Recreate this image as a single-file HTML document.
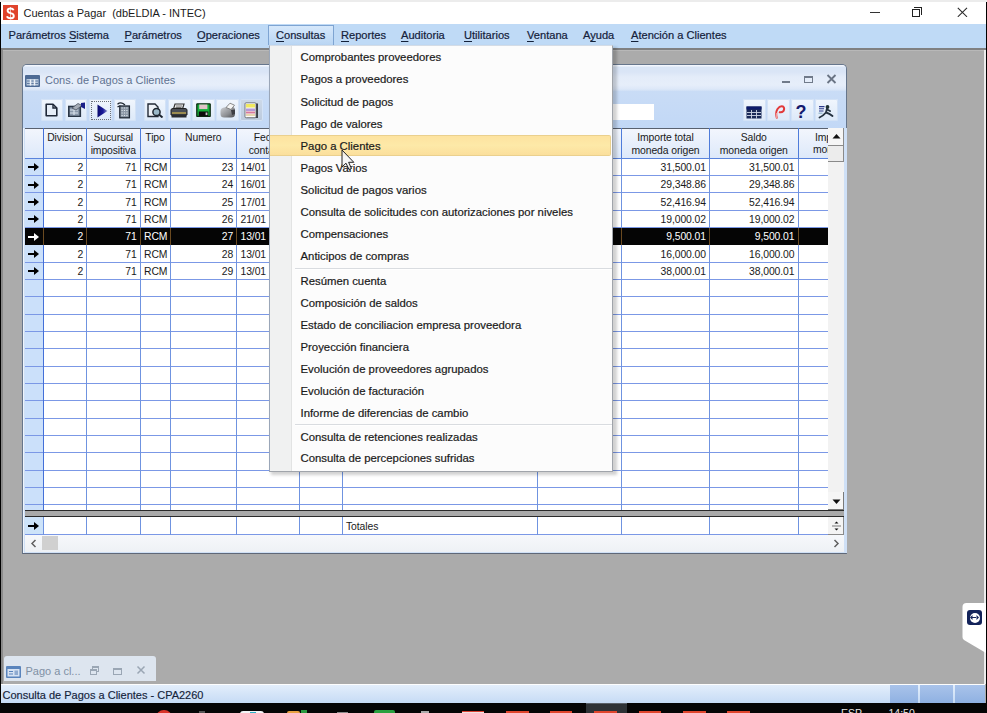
<!DOCTYPE html>
<html><head><meta charset="utf-8">
<style>
*{margin:0;padding:0;box-sizing:border-box}
html,body{width:987px;height:713px;overflow:hidden;background:#ababab;font-family:"Liberation Sans",sans-serif;position:relative}
.a{position:absolute}
.t{position:absolute;white-space:pre;line-height:1}
.mi{position:absolute;top:30px;font-size:11.1px;color:#14213a;-webkit-text-stroke:0.2px #14213a;white-space:pre;line-height:1}
.ul{text-decoration:underline;text-underline-offset:1.5px;text-decoration-thickness:1px}
.g{position:absolute;white-space:pre;line-height:1;font-size:10.4px;color:#1a1a1a;letter-spacing:-0.1px}
.vl{position:absolute;width:1px;background:#6f93e0}
.hl{position:absolute;height:1px;background:#7b98e6}
.menu .it{position:absolute;left:300.5px;font-size:11.35px;color:#1a1a1a;-webkit-text-stroke:0.2px #1a1a1a;white-space:pre;line-height:1}
.tb{position:absolute;top:99.2px;width:22.5px;height:21.6px;border-radius:2px;background:linear-gradient(#eef5fd,#dbe8f8);box-shadow:inset 0 0 0 1px #d3e2f6}
</style></head><body>

<div class="a" style="left:0;top:0;width:987px;height:24px;background:#fff"></div>
<div class="a" style="left:3px;top:5px;width:15px;height:15px;background:#e0432b"></div>
<svg class="a" style="left:3px;top:5px" width="15" height="15" viewBox="0 0 15 15"><path d="M10.6 5.2Q10 3.5 7.5 3.5Q4.6 3.5 4.6 5.8Q4.6 7.4 7.5 8.1Q10.8 8.8 10.8 10.9Q10.8 13.3 7.5 13.3Q4.6 13.3 4 11.2" fill="none" stroke="#fff" stroke-width="1.9"/><path d="M7.5 2V14.5" stroke="#fff" stroke-width="0.9" opacity="0.7"/></svg>
<div class="t" style="left:23.5px;top:7.5px;font-size:11px;color:#1a1a1a">Cuentas a Pagar  (dbELDIA - INTEC)</div>
<div class="a" style="left:0;top:0;width:987px;height:2px;background:#ececec"></div>
<div class="a" style="left:870px;top:11.5px;width:9.5px;height:1.2px;background:#333"></div>
<div class="a" style="left:912px;top:9px;width:8px;height:8px;border:1px solid #222"></div>
<div class="a" style="left:914px;top:7px;width:8px;height:8px;border-top:1px solid #222;border-right:1px solid #222"></div>
<svg class="a" style="left:956.5px;top:6.5px" width="11" height="10.5"><path d="M0.8 0.8L10 9.8M10 0.8L0.8 9.8" stroke="#2a2a2a" stroke-width="1.1"/></svg>
<div class="a" style="left:0;top:24px;width:987px;height:24px;background:#bfdaf6"></div>
<div class="a" style="left:0;top:48px;width:987px;height:1.6px;background:#808182"></div>
<div class="a" style="left:0;top:49.6px;width:987px;height:1px;background:#b8b8b8"></div>
<div class="a" style="left:268px;top:25px;width:66px;height:20px;background:linear-gradient(#d6e8fb,#b9d5f3);border:1px solid #7ea4d2;border-bottom:none"></div>
<div class="mi" style="left:8.5px">Parámetros <span class="ul">S</span>istema</div>
<div class="mi" style="left:124.5px"><span class="ul">P</span>arámetros</div>
<div class="mi" style="left:197px"><span class="ul">O</span>peraciones</div>
<div class="mi" style="left:276px"><span class="ul">C</span>onsultas</div>
<div class="mi" style="left:341px"><span class="ul">R</span>eportes</div>
<div class="mi" style="left:401px"><span class="ul">A</span>uditoria</div>
<div class="mi" style="left:464px"><span class="ul">U</span>tilitarios</div>
<div class="mi" style="left:527px"><span class="ul">V</span>entana</div>
<div class="mi" style="left:583px">A<span class="ul">y</span>uda</div>
<div class="mi" style="left:631px"><span class="ul">A</span>tención a Clientes</div>
<div class="a" style="left:0;top:2px;width:1px;height:711px;background:#000"></div>
<div class="a" style="left:1px;top:50px;width:2px;height:634px;background:#8a8a8a"></div>
<div class="a" style="left:984px;top:50px;width:1.5px;height:634px;background:#ececec"></div>
<div class="a" style="left:985.5px;top:2px;width:1.5px;height:711px;background:#000"></div>
<div class="a" style="left:22px;top:64px;width:825px;height:489.5px;border:1px solid #66768c;border-bottom:1.5px solid #5f6878;border-radius:5px 5px 0 0;background:#cfe0f6;box-shadow:inset 1px 1px 0 #eef4fc"></div>
<div class="a" style="left:23px;top:65px;width:823px;height:26px;border-radius:4px 4px 0 0;background:linear-gradient(#f2f6fd 0px,#f2f6fd 1px,#d9e5f6 2px,#dae5f6 7px,#e4ecf9 12px,#e6eefa 20px,#dde8f8 24px,#cfdff6 26px)"></div>
<div class="a" style="left:23px;top:91px;width:823px;height:37px;background:linear-gradient(#c9dcf6,#c2d8f6)"></div>
<svg class="a" style="left:25px;top:75px" width="15" height="12" viewBox="0 0 15 12"><rect x="0" y="0" width="15" height="12" rx="1" fill="#4d6a94"/><rect x="1.5" y="4" width="12" height="6.5" fill="#b8c8dc"/><path d="M2 6H13M2 8.5H13" stroke="#4d6a94" stroke-width="0.8"/><path d="M5.5 4.5V10.5M9.5 4.5V10.5" stroke="#eef2f8" stroke-width="1.5"/></svg>
<div class="t" style="left:45px;top:75px;font-size:11px;color:#5f7291">Cons. de Pagos a Clientes</div>
<div class="a" style="left:782px;top:81px;width:7.5px;height:1.8px;background:#707a8a"></div>
<div class="a" style="left:804px;top:76px;width:9px;height:7px;border:1px solid #707a8a;border-top-width:2px"></div>
<svg class="a" style="left:826px;top:74px" width="11" height="10"><path d="M1.5 1L9.5 9M9.5 1L1.5 9" stroke="#6a7484" stroke-width="1.8"/></svg>
<div class="tb" style="left:40.5px;background:linear-gradient(#f1f6fd,#dce9f9)"></div>
<div class="tb" style="left:64.8px;background:linear-gradient(#f1f6fd,#dce9f9)"></div>
<div class="tb" style="left:89.2px;background:linear-gradient(#f1f6fd,#dce9f9)"></div>
<div class="tb" style="left:113.5px;background:linear-gradient(#f1f6fd,#dce9f9)"></div>
<div class="tb" style="left:143.8px;background:linear-gradient(#f1f6fd,#dce9f9)"></div>
<div class="tb" style="left:168px;background:linear-gradient(#f1f6fd,#dce9f9)"></div>
<div class="tb" style="left:192px;background:linear-gradient(#f1f6fd,#dce9f9)"></div>
<div class="tb" style="left:216.3px;background:linear-gradient(#f1f6fd,#dce9f9)"></div>
<div class="tb" style="left:240.3px;background:linear-gradient(#cdd9e8,#bccadd)"></div>
<div class="tb" style="left:743px;background:linear-gradient(#f1f6fd,#dce9f9)"></div>
<div class="tb" style="left:767px;background:linear-gradient(#f1f6fd,#dce9f9)"></div>
<div class="tb" style="left:791px;background:linear-gradient(#f1f6fd,#dce9f9)"></div>
<div class="tb" style="left:815px;background:linear-gradient(#f1f6fd,#dce9f9)"></div>
<svg class="a" style="left:45px;top:102.5px" width="13" height="14" viewBox="0 0 13 14"><path d="M1.2 1.2H8L11.8 5V12.8H1.2Z" fill="#e6eef8" stroke="#1f2838" stroke-width="1.6" stroke-linejoin="round"/><path d="M8 1.2V5H11.8" fill="none" stroke="#1f2838" stroke-width="1.4"/></svg>
<svg class="a" style="left:66.5px;top:102px" width="19" height="15" viewBox="0 0 19 15"><rect x="1.8" y="4.5" width="11.5" height="10" fill="#8a98aa" stroke="#2a3646" stroke-width="1.6"/><path d="M3 8H11M7 8V13M3 11H11" stroke="#d8e0ea" stroke-width="1.2"/><path d="M5 6L11 1.5L15 3.5L9 8Z" fill="#a5acb6" stroke="#4a5260" stroke-width="0.8"/><path d="M14 1L18 0.5V7L14 5Z" fill="#1a1f8a"/></svg>
<div class="a" style="left:91px;top:101px;width:20px;height:19px;border:1px dotted #6a7078"></div>
<svg class="a" style="left:96.5px;top:103.5px" width="11" height="14" viewBox="0 0 11 14"><defs><linearGradient id="pg" x1="0" x2="1"><stop offset="0" stop-color="#0c0c6e"/><stop offset="0.55" stop-color="#1a1a9a"/><stop offset="1" stop-color="#8f96c8"/></linearGradient></defs><path d="M0.5 0.5L10.5 7L0.5 13.5Z" fill="url(#pg)"/></svg>
<svg class="a" style="left:116px;top:100.5px" width="15" height="18" viewBox="0 0 15 18"><path d="M1.5 3.2Q4 1 7 2.5L9 4" fill="none" stroke="#1e2630" stroke-width="1.3"/><path d="M1.5 6Q3.5 4.5 5.5 5.5" fill="none" stroke="#1e2630" stroke-width="1.2"/><rect x="3.8" y="5" width="9.6" height="11.8" fill="#8a96a4" stroke="#1f2834" stroke-width="1.3"/><path d="M5.5 7H12M5.5 9.5H12M5.5 12H12M5.5 14.5H12" stroke="#e8eef4" stroke-width="0.9" stroke-dasharray="1.2 1.2"/></svg>
<svg class="a" style="left:146.5px;top:102.5px" width="17" height="15" viewBox="0 0 17 15"><path d="M1 1H8L11 4V13.5H1Z" fill="#eef2f8" stroke="#222a36" stroke-width="1.4"/><circle cx="9.5" cy="9" r="3.6" fill="#9ab8c8" stroke="#1e2630" stroke-width="1.5"/><path d="M12 11.5L15.5 14.5" stroke="#1e2630" stroke-width="2"/></svg>
<svg class="a" style="left:170px;top:102.5px" width="18" height="15" viewBox="0 0 18 15"><path d="M5 1H14L12.5 6H3.5Z" fill="#f0f0f0" stroke="#333" stroke-width="1.2"/><path d="M6 3H12M5.5 4.5H11.5" stroke="#555" stroke-width="0.8"/><path d="M1 7Q1 5.5 3 5.5H15Q17 5.5 17 7V12H1Z" fill="#4a4e56" stroke="#222" stroke-width="1"/><rect x="2" y="9" width="14" height="2" fill="#9c8c50"/><rect x="1.5" y="12" width="15" height="2.5" fill="#2a2c30"/></svg>
<svg class="a" style="left:195.5px;top:102.5px" width="15" height="14" viewBox="0 0 15 14"><rect x="0.8" y="0.8" width="13.4" height="12.6" rx="0.5" fill="#14b03a" stroke="#0d2a12" stroke-width="1.3"/><rect x="3.2" y="1.5" width="8.2" height="4.6" fill="#e0c4c8"/><rect x="2.8" y="8.5" width="9.5" height="4.6" fill="#0c0c0c"/><rect x="9.6" y="9.5" width="1.8" height="2.6" fill="#c8c8c8"/></svg>
<svg class="a" style="left:218.5px;top:101.5px" width="18" height="17" viewBox="0 0 18 17"><defs><linearGradient id="p2" x1="0" x2="1" y1="0" y2="1"><stop offset="0" stop-color="#d0d2d6"/><stop offset="0.6" stop-color="#8c8e92"/><stop offset="1" stop-color="#4a4c50"/></linearGradient></defs><path d="M1.5 9Q1.5 6 5 5.5L12 4.5Q16 4.5 16 8V12Q16 15.5 12 15.5H5Q1.5 15.5 1.5 12Z" fill="url(#p2)"/><path d="M7 5.5L11 1.2L15.5 3.2L12 7.5Z" fill="#f4f4f4" stroke="#707070" stroke-width="0.8"/><path d="M12 8L16 7.5V12L13 13Z" fill="#3c3e44"/></svg>
<svg class="a" style="left:244px;top:101.5px" width="15" height="17" viewBox="0 0 15 17"><rect x="3" y="1.5" width="11" height="14.5" fill="#3a3e46"/><rect x="1" y="0.8" width="11" height="15" rx="1" fill="#fafafa" stroke="#5a5e66" stroke-width="0.8"/><rect x="2" y="2" width="9" height="3.5" fill="#f0e860"/><rect x="2" y="6.5" width="9" height="2.5" fill="#b49ad8"/><rect x="2" y="9.5" width="9" height="2" fill="#d87a9a"/><rect x="2" y="12" width="9" height="2" fill="#e6d6b0"/></svg>
<svg class="a" style="left:745.5px;top:105.5px" width="16" height="13" viewBox="0 0 16 13"><rect x="0.5" y="0.5" width="15" height="12" fill="#1a2a58"/><rect x="0.5" y="0.5" width="15" height="3" fill="#0c1a6a"/><path d="M1 6.5H15M1 9.5H15M5.5 4V12.5M10.5 4V12.5" stroke="#d0d8e8" stroke-width="0.9"/></svg>
<svg class="a" style="left:773px;top:103.5px" width="13" height="16" viewBox="0 0 13 16"><path d="M4 14.5Q2 9 4.5 5Q7 1.5 10 2.5Q12 4 10.5 7Q8.5 9 6 8" fill="none" stroke="#e23a3a" stroke-width="2"/><path d="M4 14.5Q3 12 3.6 9" fill="none" stroke="#f29a9a" stroke-width="1.5"/></svg>
<div class="t" style="left:795.5px;top:102.5px;font-size:18px;font-weight:bold;color:#141a6e">?</div>
<svg class="a" style="left:817px;top:103px" width="18" height="16" viewBox="0 0 18 16"><path d="M2 3.6H7.5M2 5.8H7M2 8H6.5" stroke="#2c3a8c" stroke-width="1.1"/><path d="M1.5 10.2H5.5" stroke="#8ab0c8" stroke-width="1.1"/><circle cx="10.5" cy="4" r="1.9" fill="#1e3030"/><path d="M10 5.5L9 9.5Q6 13 2.5 14.5M9 9.5Q12.5 10.5 15.5 13M10.2 6.5L13 8" fill="none" stroke="#243240" stroke-width="1.9" stroke-linecap="round"/></svg>
<div class="a" style="left:540px;top:104px;width:114px;height:16px;background:#fff"></div>
<div class="a" style="left:25px;top:128px;width:803px;height:382px;background:#fff"></div>
<div class="a" style="left:25px;top:128px;width:803px;height:30px;background:linear-gradient(#f3f6fd,#dde9fa)"></div>
<div class="a" style="left:25px;top:127.5px;width:821px;height:1px;background:#59616f"></div>
<div class="a" style="left:25px;top:158px;width:18.5px;height:352px;background:#cbe0fa"></div>
<div class="hl" style="left:25px;top:157.75px;width:803px"></div>
<div class="hl" style="left:25px;top:175.08px;width:803px"></div>
<div class="hl" style="left:25px;top:192.42px;width:803px"></div>
<div class="hl" style="left:25px;top:209.75px;width:803px"></div>
<div class="hl" style="left:25px;top:227.08px;width:803px"></div>
<div class="hl" style="left:25px;top:244.42px;width:803px"></div>
<div class="hl" style="left:25px;top:261.75px;width:803px"></div>
<div class="hl" style="left:25px;top:279.08px;width:803px"></div>
<div class="hl" style="left:25px;top:296.42px;width:803px"></div>
<div class="hl" style="left:25px;top:313.75px;width:803px"></div>
<div class="hl" style="left:25px;top:331.08px;width:803px"></div>
<div class="hl" style="left:25px;top:348.42px;width:803px"></div>
<div class="hl" style="left:25px;top:365.75px;width:803px"></div>
<div class="hl" style="left:25px;top:383.08px;width:803px"></div>
<div class="hl" style="left:25px;top:400.42px;width:803px"></div>
<div class="hl" style="left:25px;top:417.75px;width:803px"></div>
<div class="hl" style="left:25px;top:435.08px;width:803px"></div>
<div class="hl" style="left:25px;top:452.42px;width:803px"></div>
<div class="hl" style="left:25px;top:469.75px;width:803px"></div>
<div class="hl" style="left:25px;top:487.08px;width:803px"></div>
<div class="hl" style="left:25px;top:504.42px;width:803px"></div>
<div class="vl" style="left:43.0px;top:128px;height:382px"></div>
<div class="vl" style="left:86.0px;top:128px;height:382px"></div>
<div class="vl" style="left:139.5px;top:128px;height:382px"></div>
<div class="vl" style="left:169.5px;top:128px;height:382px"></div>
<div class="vl" style="left:236.0px;top:128px;height:382px"></div>
<div class="vl" style="left:299.0px;top:128px;height:382px"></div>
<div class="vl" style="left:342.0px;top:128px;height:382px"></div>
<div class="vl" style="left:537.0px;top:128px;height:382px"></div>
<div class="vl" style="left:621.0px;top:128px;height:382px"></div>
<div class="vl" style="left:709.0px;top:128px;height:382px"></div>
<div class="vl" style="left:797.5px;top:128px;height:382px"></div>
<div class="a" style="left:43.0px;top:128px;width:1px;height:30.5px;background:#4f7cda"></div>
<div class="a" style="left:86.0px;top:128px;width:1px;height:30.5px;background:#4f7cda"></div>
<div class="a" style="left:139.5px;top:128px;width:1px;height:30.5px;background:#4f7cda"></div>
<div class="a" style="left:169.5px;top:128px;width:1px;height:30.5px;background:#4f7cda"></div>
<div class="a" style="left:236.0px;top:128px;width:1px;height:30.5px;background:#4f7cda"></div>
<div class="a" style="left:299.0px;top:128px;width:1px;height:30.5px;background:#4f7cda"></div>
<div class="a" style="left:342.0px;top:128px;width:1px;height:30.5px;background:#4f7cda"></div>
<div class="a" style="left:537.0px;top:128px;width:1px;height:30.5px;background:#4f7cda"></div>
<div class="a" style="left:621.0px;top:128px;width:1px;height:30.5px;background:#4f7cda"></div>
<div class="a" style="left:709.0px;top:128px;width:1px;height:30.5px;background:#4f7cda"></div>
<div class="a" style="left:797.5px;top:128px;width:1px;height:30.5px;background:#4f7cda"></div>
<div class="a" style="left:25px;top:157.75px;width:803px;height:1px;background:#5a84dc"></div>
<div class="a" style="left:43px;top:128px;width:1px;height:382px;background:#4470d8"></div>
<div class="a" style="left:43px;top:517px;width:1px;height:17.5px;background:#4470d8"></div>
<div class="g" style="left:43.5px;width:43.0px;top:132.5px;text-align:center">Division</div>
<div class="g" style="left:86.5px;width:53.5px;top:132.5px;text-align:center">Sucursal</div>
<div class="g" style="left:86.5px;width:53.5px;top:145.8px;text-align:center">impositiva</div>
<div class="g" style="left:140px;width:30px;top:132.5px;text-align:center">Tipo</div>
<div class="g" style="left:170px;width:66.5px;top:132.5px;text-align:center">Numero</div>
<div class="g" style="left:236.5px;width:63.0px;top:132.5px;text-align:center">Fecha</div>
<div class="g" style="left:236.5px;width:63.0px;top:145.8px;text-align:center">contable</div>
<div class="g" style="left:621.5px;width:88.0px;top:132.5px;text-align:center">Importe total</div>
<div class="g" style="left:621.5px;width:88.0px;top:145.8px;text-align:center">moneda origen</div>
<div class="g" style="left:709.5px;width:88.5px;top:132.5px;text-align:center">Saldo</div>
<div class="g" style="left:709.5px;width:88.5px;top:145.8px;text-align:center">moneda origen</div>
<div class="a" style="left:798px;top:128px;width:30px;height:30px;overflow:hidden">
<div class="g" style="left:17px;top:4.5px">Importe</div><div class="g" style="left:15px;top:17.3px">moneda</div></div>
<svg class="a" style="left:28px;top:162.25px" width="12" height="10"><path d="M0 5H8" stroke="#000" stroke-width="2"/><path d="M6 1L11 5L6 9Z" fill="#000"/></svg>
<div class="g" style="left:43.5px;width:39.7px;top:162.85px;text-align:right;color:#1a1a1a">2</div>
<div class="g" style="left:86.5px;width:50.2px;top:162.85px;text-align:right;color:#1a1a1a">71</div>
<div class="g" style="left:144px;top:162.85px;color:#1a1a1a">RCM</div>
<div class="g" style="left:170px;width:63.2px;top:162.85px;text-align:right;color:#1a1a1a">23</div>
<div class="g" style="left:240.5px;top:162.85px;color:#1a1a1a">14/01</div>
<div class="g" style="left:621.5px;width:84.4px;top:162.85px;text-align:right;color:#1a1a1a">31,500.01</div>
<div class="g" style="left:709.5px;width:84.9px;top:162.85px;text-align:right;color:#1a1a1a">31,500.01</div>
<svg class="a" style="left:28px;top:179.58px" width="12" height="10"><path d="M0 5H8" stroke="#000" stroke-width="2"/><path d="M6 1L11 5L6 9Z" fill="#000"/></svg>
<div class="g" style="left:43.5px;width:39.7px;top:180.18px;text-align:right;color:#1a1a1a">2</div>
<div class="g" style="left:86.5px;width:50.2px;top:180.18px;text-align:right;color:#1a1a1a">71</div>
<div class="g" style="left:144px;top:180.18px;color:#1a1a1a">RCM</div>
<div class="g" style="left:170px;width:63.2px;top:180.18px;text-align:right;color:#1a1a1a">24</div>
<div class="g" style="left:240.5px;top:180.18px;color:#1a1a1a">16/01</div>
<div class="g" style="left:621.5px;width:84.4px;top:180.18px;text-align:right;color:#1a1a1a">29,348.86</div>
<div class="g" style="left:709.5px;width:84.9px;top:180.18px;text-align:right;color:#1a1a1a">29,348.86</div>
<svg class="a" style="left:28px;top:196.92px" width="12" height="10"><path d="M0 5H8" stroke="#000" stroke-width="2"/><path d="M6 1L11 5L6 9Z" fill="#000"/></svg>
<div class="g" style="left:43.5px;width:39.7px;top:197.52px;text-align:right;color:#1a1a1a">2</div>
<div class="g" style="left:86.5px;width:50.2px;top:197.52px;text-align:right;color:#1a1a1a">71</div>
<div class="g" style="left:144px;top:197.52px;color:#1a1a1a">RCM</div>
<div class="g" style="left:170px;width:63.2px;top:197.52px;text-align:right;color:#1a1a1a">25</div>
<div class="g" style="left:240.5px;top:197.52px;color:#1a1a1a">17/01</div>
<div class="g" style="left:621.5px;width:84.4px;top:197.52px;text-align:right;color:#1a1a1a">52,416.94</div>
<div class="g" style="left:709.5px;width:84.9px;top:197.52px;text-align:right;color:#1a1a1a">52,416.94</div>
<svg class="a" style="left:28px;top:214.25px" width="12" height="10"><path d="M0 5H8" stroke="#000" stroke-width="2"/><path d="M6 1L11 5L6 9Z" fill="#000"/></svg>
<div class="g" style="left:43.5px;width:39.7px;top:214.85px;text-align:right;color:#1a1a1a">2</div>
<div class="g" style="left:86.5px;width:50.2px;top:214.85px;text-align:right;color:#1a1a1a">71</div>
<div class="g" style="left:144px;top:214.85px;color:#1a1a1a">RCM</div>
<div class="g" style="left:170px;width:63.2px;top:214.85px;text-align:right;color:#1a1a1a">26</div>
<div class="g" style="left:240.5px;top:214.85px;color:#1a1a1a">21/01</div>
<div class="g" style="left:621.5px;width:84.4px;top:214.85px;text-align:right;color:#1a1a1a">19,000.02</div>
<div class="g" style="left:709.5px;width:84.9px;top:214.85px;text-align:right;color:#1a1a1a">19,000.02</div>
<div class="a" style="left:25px;top:228.08px;width:803px;height:16.8px;background:#050505"></div>
<svg class="a" style="left:28px;top:231.58px" width="12" height="10"><path d="M0 5H8" stroke="#fff" stroke-width="2"/><path d="M6 1L11 5L6 9Z" fill="#fff"/></svg>
<div class="g" style="left:43.5px;width:39.7px;top:232.18px;text-align:right;color:#fff">2</div>
<div class="g" style="left:86.5px;width:50.2px;top:232.18px;text-align:right;color:#fff">71</div>
<div class="g" style="left:144px;top:232.18px;color:#fff">RCM</div>
<div class="g" style="left:170px;width:63.2px;top:232.18px;text-align:right;color:#fff">27</div>
<div class="g" style="left:240.5px;top:232.18px;color:#fff">13/01</div>
<div class="g" style="left:621.5px;width:84.4px;top:232.18px;text-align:right;color:#fff">9,500.01</div>
<div class="g" style="left:709.5px;width:84.9px;top:232.18px;text-align:right;color:#fff">9,500.01</div>
<div class="a" style="left:43.0px;top:228.08px;width:1px;height:16.8px;background:#6b4a20"></div>
<div class="a" style="left:86.0px;top:228.08px;width:1px;height:16.8px;background:#6b4a20"></div>
<div class="a" style="left:139.5px;top:228.08px;width:1px;height:16.8px;background:#6b4a20"></div>
<div class="a" style="left:169.5px;top:228.08px;width:1px;height:16.8px;background:#6b4a20"></div>
<div class="a" style="left:236.0px;top:228.08px;width:1px;height:16.8px;background:#6b4a20"></div>
<div class="a" style="left:299.0px;top:228.08px;width:1px;height:16.8px;background:#6b4a20"></div>
<div class="a" style="left:342.0px;top:228.08px;width:1px;height:16.8px;background:#6b4a20"></div>
<div class="a" style="left:537.0px;top:228.08px;width:1px;height:16.8px;background:#6b4a20"></div>
<div class="a" style="left:621.0px;top:228.08px;width:1px;height:16.8px;background:#6b4a20"></div>
<div class="a" style="left:709.0px;top:228.08px;width:1px;height:16.8px;background:#6b4a20"></div>
<div class="a" style="left:797.5px;top:228.08px;width:1px;height:16.8px;background:#6b4a20"></div>
<svg class="a" style="left:28px;top:248.92px" width="12" height="10"><path d="M0 5H8" stroke="#000" stroke-width="2"/><path d="M6 1L11 5L6 9Z" fill="#000"/></svg>
<div class="g" style="left:43.5px;width:39.7px;top:249.52px;text-align:right;color:#1a1a1a">2</div>
<div class="g" style="left:86.5px;width:50.2px;top:249.52px;text-align:right;color:#1a1a1a">71</div>
<div class="g" style="left:144px;top:249.52px;color:#1a1a1a">RCM</div>
<div class="g" style="left:170px;width:63.2px;top:249.52px;text-align:right;color:#1a1a1a">28</div>
<div class="g" style="left:240.5px;top:249.52px;color:#1a1a1a">13/01</div>
<div class="g" style="left:621.5px;width:84.4px;top:249.52px;text-align:right;color:#1a1a1a">16,000.00</div>
<div class="g" style="left:709.5px;width:84.9px;top:249.52px;text-align:right;color:#1a1a1a">16,000.00</div>
<svg class="a" style="left:28px;top:266.25px" width="12" height="10"><path d="M0 5H8" stroke="#000" stroke-width="2"/><path d="M6 1L11 5L6 9Z" fill="#000"/></svg>
<div class="g" style="left:43.5px;width:39.7px;top:266.85px;text-align:right;color:#1a1a1a">2</div>
<div class="g" style="left:86.5px;width:50.2px;top:266.85px;text-align:right;color:#1a1a1a">71</div>
<div class="g" style="left:144px;top:266.85px;color:#1a1a1a">RCM</div>
<div class="g" style="left:170px;width:63.2px;top:266.85px;text-align:right;color:#1a1a1a">29</div>
<div class="g" style="left:240.5px;top:266.85px;color:#1a1a1a">13/01</div>
<div class="g" style="left:621.5px;width:84.4px;top:266.85px;text-align:right;color:#1a1a1a">38,000.01</div>
<div class="g" style="left:709.5px;width:84.9px;top:266.85px;text-align:right;color:#1a1a1a">38,000.01</div>
<div class="a" style="left:828px;top:128px;width:15.5px;height:382px;background:#f2f2f2"></div>
<div class="a" style="left:843.5px;top:128px;width:3px;height:425px;background:#cfe0f6"></div>
<div class="a" style="left:828px;top:128px;width:16px;height:17.5px;background:#f6f6f6;border-right:1px solid #8a8a8a;border-bottom:1px solid #8a8a8a"></div>
<svg class="a" style="left:831.5px;top:133px" width="9" height="6"><path d="M0.5 5.5L4.5 1L8.5 5.5Z" fill="#111"/></svg>
<div class="a" style="left:828px;top:145.5px;width:16px;height:16.5px;background:#ececec;border-right:1px solid #8a8a8a;border-bottom:1px solid #8a8a8a"></div>
<div class="a" style="left:828px;top:492px;width:16px;height:18px;background:#f6f6f6;border-right:1px solid #7a7a7a;border-bottom:1px solid #7a7a7a"></div>
<svg class="a" style="left:831.5px;top:498.5px" width="9" height="6"><path d="M0.5 0.5L4.5 5L8.5 0.5Z" fill="#111"/></svg>
<div class="a" style="left:25px;top:510px;width:819px;height:7px;background:#a9a9a9;border-top:1.5px solid #2a2a2a;border-bottom:1.5px solid #2a2a2a"></div>
<div class="a" style="left:25px;top:517px;width:803px;height:17.5px;background:#fff"></div>
<div class="a" style="left:25px;top:517px;width:18.5px;height:17.5px;background:#cde3f9"></div>
<div class="hl" style="left:25px;top:533.8px;width:803px"></div>
<div class="vl" style="left:43.0px;top:517px;height:17.5px"></div>
<div class="vl" style="left:86.0px;top:517px;height:17.5px"></div>
<div class="vl" style="left:139.5px;top:517px;height:17.5px"></div>
<div class="vl" style="left:169.5px;top:517px;height:17.5px"></div>
<div class="vl" style="left:236.0px;top:517px;height:17.5px"></div>
<div class="vl" style="left:299.0px;top:517px;height:17.5px"></div>
<div class="vl" style="left:342.0px;top:517px;height:17.5px"></div>
<div class="vl" style="left:537.0px;top:517px;height:17.5px"></div>
<div class="vl" style="left:621.0px;top:517px;height:17.5px"></div>
<div class="vl" style="left:709.0px;top:517px;height:17.5px"></div>
<div class="vl" style="left:797.5px;top:517px;height:17.5px"></div>
<svg class="a" style="left:28px;top:521px" width="12" height="10"><path d="M0 5H8" stroke="#000" stroke-width="2"/><path d="M6 1L11 5L6 9Z" fill="#000"/></svg>
<div class="g" style="left:346px;top:521.5px">Totales</div>
<div class="a" style="left:828px;top:517px;width:16px;height:17.5px;background:#f4f4f4;border-right:1px solid #8a8a8a;border-bottom:1px solid #8a8a8a"></div>
<svg class="a" style="left:831px;top:520px" width="11" height="12"><path d="M3.5 3.5L5.5 1.5L7.5 3.5Z" fill="#111"/><path d="M1 6H10" stroke="#777" stroke-width="1"/><path d="M3.5 8.5L5.5 10.5L7.5 8.5Z" fill="#111"/></svg>
<div class="a" style="left:25px;top:535px;width:819px;height:16.5px;background:linear-gradient(#f6f8fb,#eef1f5)"></div>
<div class="a" style="left:42px;top:536px;width:15.5px;height:14px;background:#d0d0d0"></div>
<svg class="a" style="left:29.5px;top:538.5px" width="8" height="9"><path d="M5.5 1L2 4.5L5.5 8" stroke="#606060" stroke-width="1.5" fill="none"/></svg>
<svg class="a" style="left:832px;top:538.5px" width="8" height="9"><path d="M2.5 1L6 4.5L2.5 8" stroke="#606060" stroke-width="1.5" fill="none"/></svg>
<div class="a" style="left:271px;top:47px;width:346px;height:428px;background:rgba(0,0,0,0.18);filter:blur(1.5px)"></div>
<div class="menu a" style="left:269px;top:44.5px;width:344px;height:427px;background:#fcfcfc;border:1px solid #a0a4aa;border-top-color:#d4dce6;border-left-color:#9aa6b8"></div>
<div class="a" style="left:270px;top:45.5px;width:22px;height:425px;background:#f0f1f1;border-right:1px solid #e2e3e3"></div>
<div class="menu">
<div class="a" style="left:295px;top:267.70px;width:317px;height:1px;background:#d9dce0"></div>
<div class="a" style="left:295px;top:268.70px;width:317px;height:1px;background:#fff"></div>
<div class="a" style="left:295px;top:424.40px;width:317px;height:1px;background:#d9dce0"></div>
<div class="a" style="left:295px;top:425.40px;width:317px;height:1px;background:#fff"></div>
<div class="it" style="top:52.30px">Comprobantes proveedores</div>
<div class="it" style="top:74.40px">Pagos a proveedores</div>
<div class="it" style="top:96.50px">Solicitud de pagos</div>
<div class="it" style="top:118.60px">Pago de valores</div>
<div class="a" style="left:270px;top:134.6px;width:341px;height:21px;background:linear-gradient(#fde3a0,#fde9a8 50%,#fbdf9c);border:1px solid #ead08e;border-left:none;border-radius:0 2px 2px 0"></div>
<div class="it" style="top:140.70px">Pago a Clientes</div>
<div class="it" style="top:162.80px">Pagos Varios</div>
<div class="it" style="top:184.90px">Solicitud de pagos varios</div>
<div class="it" style="top:207.00px">Consulta de solicitudes con autorizaciones por niveles</div>
<div class="it" style="top:229.10px">Compensaciones</div>
<div class="it" style="top:251.20px">Anticipos de compras</div>
<div class="it" style="top:275.70px">Resúmen cuenta</div>
<div class="it" style="top:297.80px">Composición de saldos</div>
<div class="it" style="top:319.90px">Estado de conciliacion empresa proveedora</div>
<div class="it" style="top:342.00px">Proyección financiera</div>
<div class="it" style="top:364.10px">Evolución de proveedores agrupados</div>
<div class="it" style="top:386.20px">Evolución de facturación</div>
<div class="it" style="top:408.30px">Informe de diferencias de cambio</div>
<div class="it" style="top:431.90px">Consulta de retenciones realizadas</div>
<div class="it" style="top:453.00px">Consulta de percepciones sufridas</div>
</div>
<svg class="a" style="left:341px;top:148.6px" width="15" height="22"><path d="M1 1L1 18L5 14.2L8 20.5L10.5 19.5L7.6 13.3L12.8 13.3Z" fill="#f4f4f4" fill-opacity="0.85" stroke="#222" stroke-width="1"/></svg>
<div class="a" style="left:4px;top:656px;width:152px;height:25px;background:#dde5ef;border-radius:3px 3px 0 0"></div>
<svg class="a" style="left:6px;top:666px" width="15" height="12" viewBox="0 0 15 12"><rect x="0" y="0" width="15" height="12" rx="1" fill="#5a84bc"/><rect x="1.5" y="3" width="12" height="7.5" fill="#d6e2f2"/><path d="M3 5.5H7M3 8H7" stroke="#5a84bc" stroke-width="1"/><rect x="8.5" y="4.5" width="3.5" height="4.5" fill="#8eaad0"/></svg>
<div class="t" style="left:25.5px;top:665.5px;font-size:11px;color:#8090a4">Pago a cl...</div>
<div class="a" style="left:92px;top:666px;width:7px;height:6px;border:1px solid #9aa6b4;border-top-width:2px"></div>
<div class="a" style="left:90px;top:668.5px;width:7px;height:6px;border:1px solid #9aa6b4;border-top-width:2px;background:#dde5ef"></div>
<div class="a" style="left:113px;top:668px;width:9px;height:7px;border:1px solid #9aa6b4;border-top-width:2px"></div>
<svg class="a" style="left:136px;top:665px" width="10" height="10"><path d="M1.5 1.5L8.5 8.5M8.5 1.5L1.5 8.5" stroke="#9aa6b4" stroke-width="1.5"/></svg>
<svg class="a" style="left:960px;top:603px" width="26" height="52"><path d="M6.5 0H26V50L4 37Q2.5 36 2.5 34V4Q2.5 0 6.5 0Z" fill="#fff"/></svg>
<div class="a" style="left:967px;top:610px;width:15px;height:15px;background:#13235a;border-radius:3px"></div>
<div class="a" style="left:969.5px;top:612.5px;width:10px;height:10px;background:#fff;border-radius:50%"></div>
<svg class="a" style="left:970px;top:615px" width="9" height="5"><path d="M0 2.5L2.5 0V5ZM9 2.5L6.5 0V5Z M2 2H7V3H2Z" fill="#13235a"/></svg>
<div class="a" style="left:1px;top:683.5px;width:984px;height:1.5px;background:#fdfdfd"></div>
<div class="a" style="left:1px;top:685px;width:984px;height:18px;background:linear-gradient(#e3eefb,#c6dbf5)"></div>
<div class="a" style="left:889.5px;top:685px;width:28.5px;height:18px;background:linear-gradient(#a9c3ea,#8fb1e2)"></div>
<div class="a" style="left:920px;top:685px;width:33px;height:18px;background:linear-gradient(#a9c3ea,#8fb1e2)"></div>
<div class="a" style="left:955px;top:685px;width:30px;height:18px;background:linear-gradient(#a9c3ea,#8fb1e2)"></div>
<div class="t" style="left:2.5px;top:689.5px;font-size:11px;color:#14233a;-webkit-text-stroke:0.15px #14233a">Consulta de Pagos a Clientes - CPA2260</div>
<div class="a" style="left:0;top:703px;width:987px;height:10px;background:#050505"></div>
<div class="a" style="left:585.7px;top:703px;width:41.3px;height:10px;background:#2e3236;border-top:1px solid #5a6068"></div>
<div class="a" style="left:156px;top:709.5px;width:15.5px;height:15px;border-radius:50%;background:#d9342a"></div>
<div class="a" style="left:199px;top:711px;width:6px;height:3px;background:#555"></div>
<div class="a" style="left:240px;top:710.5px;width:23.5px;height:6px;border-radius:3px;background:#f2f4f6"></div>
<div class="a" style="left:250px;top:711.5px;width:6px;height:3px;background:#2ab0c8"></div>
<div class="a" style="left:287px;top:710.5px;width:13px;height:4px;background:#e8a040;border-radius:2px 2px 0 0"></div>
<div class="a" style="left:301px;top:709.5px;width:6px;height:4px;background:#2a9a40"></div>
<div class="a" style="left:337px;top:711.5px;width:11px;height:2px;background:#8a8a8a"></div>
<div class="a" style="left:374px;top:710px;width:21px;height:4px;background:#2aa040;border-radius:2px 2px 0 0"></div>
<div class="a" style="left:421px;top:710.5px;width:8px;height:3px;background:#aaa"></div>
<div class="a" style="left:462px;top:710.5px;width:22px;height:3px;background:#f0e0e0;border-top:1px solid #d84030"></div>
<div class="a" style="left:506px;top:710.5px;width:22.600000000000023px;height:3px;background:#e0452c"></div>
<div class="a" style="left:550.4px;top:710.5px;width:21.899999999999977px;height:3px;background:#e0452c"></div>
<div class="a" style="left:594px;top:710.5px;width:23px;height:3px;background:#e0452c"></div>
<div class="a" style="left:639px;top:710.5px;width:22px;height:3px;background:#e0452c"></div>
<div class="a" style="left:683px;top:710.5px;width:23px;height:3px;background:#e0452c"></div>
<div class="a" style="left:726.8px;top:710.5px;width:23.200000000000045px;height:3px;background:#e0452c"></div>
<div class="a" style="left:520px;top:710.5px;width:8.5px;height:3px;background:#e0452c"></div>
<div class="t" style="left:841px;top:707.6px;font-size:10.5px;color:#e8e8e8">ESP</div>
<div class="t" style="left:888.5px;top:707.6px;font-size:10.5px;color:#e8e8e8">14:50</div>
</body></html>
